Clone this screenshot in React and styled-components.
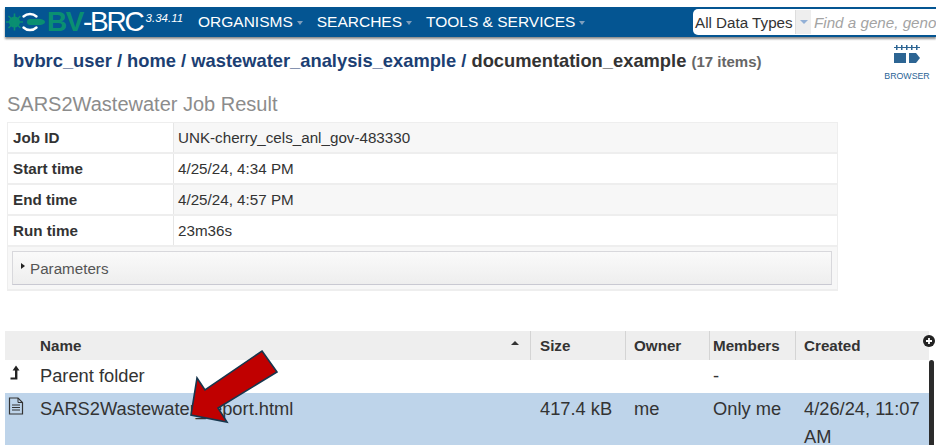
import styled, { createGlobalStyle } from "styled-components";

const GlobalStyle = createGlobalStyle`
  html, body {
    margin: 0;
    padding: 0;
    background: #fff;
    overflow: hidden;
  }
  body {
    font-family: "Liberation Sans", Arial, sans-serif;
    color: #333;
  }
`;

const Page = styled.div`
  position: relative;
  width: 936px;
  height: 446px;
  padding-top: 7px;
  box-sizing: border-box;
  overflow: hidden;
`;

const TopBar = styled.header`
  display: flex;
  align-items: center;
  height: 30px;
  margin-left: 5px;
  background: #045592;
  box-shadow: 0 2px 2px rgba(0, 0, 0, 0.45);
  color: #fff;
  overflow: hidden;
`;

const Brand = styled.div`
  display: flex;
  align-items: center;
  width: 193px;
  flex: none;
`;

const BrandGreen = styled.span`
  font-size: 28px;
  letter-spacing: -1.5px;
  color: #0a8f71;
  font-weight: 700;
`;

const BrandWhite = styled.span`
  font-size: 28px;
  letter-spacing: -2.2px;
  color: #fff;
`;

const Version = styled.sup`
  font-size: 11.5px;
  font-style: italic;
  margin: -6px 0 0 3px;
  align-self: center;
  line-height: 1;
`;

const NavItem = styled.div`
  display: flex;
  align-items: center;
  gap: 4px;
  font-size: 15.5px;
  margin-right: 14px;
  white-space: nowrap;

  &::after {
    content: "";
    border-left: 3.5px solid transparent;
    border-right: 3.5px solid transparent;
    border-top: 4px solid #7f9fbd;
    margin-top: 2px;
  }
`;

const Search = styled.div`
  display: flex;
  align-items: center;
  height: 26px;
  margin-left: auto;
  width: 243px;
  flex: none;
  background: #fff;
  border-radius: 5px 0 0 5px;
  overflow: hidden;
`;

const TypeLabel = styled.span`
  font-size: 15.2px;
  color: #333;
  margin-left: 2px;
  white-space: nowrap;
  width: 100px;
  flex: none;
`;

const TypeArrow = styled.span`
  display: flex;
  align-items: center;
  justify-content: center;
  width: 16px;
  height: 24px;
  flex: none;
  background: #eee;
  border-left: 1px solid #ddd;
  box-sizing: border-box;

  &::after {
    content: "";
    border-left: 4px solid transparent;
    border-right: 4px solid transparent;
    border-top: 4px solid #92b0d6;
  }
`;

const Placeholder = styled.span`
  font-size: 15.2px;
  font-style: italic;
  color: #a3a3a3;
  margin-left: 3px;
  white-space: nowrap;
`;

const TitleRow = styled.div`
  display: flex;
  justify-content: space-between;
  align-items: flex-start;
  height: 55px;
  padding-left: 13px;
`;

const Crumbs = styled.div`
  font-size: 18.33px;
  font-weight: 700;
  color: #1c3f73;
  margin-top: 13px;
  white-space: nowrap;
`;

const Current = styled.span`
  color: #333;
`;

const ItemCount = styled.span`
  font-size: 15px;
  color: #666;
`;

const BrowserButton = styled.div`
  display: flex;
  flex-direction: column;
  align-items: center;
  width: 44px;
  margin: 7px 7px 0 0;
  font-size: 8.8px;
  color: #2a6496;
`;

const BrowserLabel = styled.span`
  margin-top: 7px;
`;

const JobTitle = styled.h2`
  margin: 0 0 6px 7px;
  font-size: 20px;
  line-height: 24px;
  font-weight: 400;
  color: #8c8c8c;
`;

const JobCard = styled.section`
  width: 831px;
  margin-left: 7px;
  border: 1px solid #eee;
  border-bottom-width: 2px;
  box-sizing: border-box;
`;

const JobRow = styled.div`
  display: grid;
  grid-template-columns: 166px 1fr;
  height: 31px;
  box-sizing: border-box;
  border-bottom: 2px solid #eee;
  font-size: 15.2px;
  background: ${(p) => (p.$shaded ? "#f7f7f7" : "#fff")};
`;

const JobKey = styled.div`
  display: flex;
  align-items: center;
  padding-left: 5px;
  font-weight: 700;
  color: #333;
  background: #fff;
  border-right: 1px solid #e6e6e6;
`;

const JobValue = styled.div`
  display: flex;
  align-items: center;
  padding-left: 4px;
`;

const ParamsPane = styled.div`
  padding: 4px 5px 4px 4px;
  background: #f7f7f7;
`;

const ParamsBox = styled.div`
  display: flex;
  align-items: center;
  gap: 5px;
  height: 34px;
  padding-left: 8px;
  box-sizing: border-box;
  border: 1px solid #d8d8dc;
  border-bottom-color: #c9c9d2;
  background: linear-gradient(#fafafa, #eeeeee);
  font-size: 15.2px;
  color: #555;
`;

const Caret = styled.span`
  border-top: 3px solid transparent;
  border-bottom: 3px solid transparent;
  border-left: 4px solid #222;
  margin-top: -4px;
`;

const Grid = styled.section`
  position: relative;
  margin: 40px 0 0 5px;
`;

const GridRow = styled.div`
  display: grid;
  grid-template-columns: 35px 490px 95px 84px 86px 134px;
  width: 924px;
  height: ${(p) => p.$height}px;
  box-sizing: border-box;
  background: ${(p) => p.$bg || "#fff"};
`;

const HeadCell = styled.div`
  display: flex;
  align-items: center;
  position: relative;
  padding: 0 0 0 ${(p) => p.$pad ?? 8}px;
  border-left: ${(p) => (p.$line ? "1px solid #d4d4d4" : "none")};
  font-size: 15.2px;
  font-weight: 700;
  color: #333;
`;

const Cell = styled.div`
  padding: 2px 0 0 ${(p) => p.$pad ?? 9}px;
  font-size: 18.3px;
  line-height: 28px;
  color: #333;
`;

const IconCell = styled.div`
  padding: ${(p) => p.$top}px 0 0 ${(p) => p.$left}px;
`;

const SortMark = styled.span`
  position: absolute;
  right: 11px;
  top: 10px;
  border-left: 4px solid transparent;
  border-right: 4px solid transparent;
  border-bottom: 4px solid #333;
`;

const AddColumn = styled.svg`
  position: absolute;
  right: 1px;
  top: 4px;
`;

const ScrollThumb = styled.div`
  position: absolute;
  right: 2px;
  top: 29px;
  bottom: 0;
  width: 5px;
  border-radius: 3px 3px 0 0;
  background: #2b2b2b;
`;

const Callout = styled.svg`
  position: absolute;
  left: 0;
  top: 0;
  pointer-events: none;
`;

function Logo() {
  return (
    <svg width="42" height="30" viewBox="0 0 42 30">
      <g fill="#0a8f71">
        <circle cx="9.5" cy="15" r="5.5" />
        <path
          d="M9.5 6.5v17M1 15h17M3.5 9l12 12M15.5 9l-12 12"
          stroke="#0a8f71"
          strokeWidth="1.6"
        />
        <path d="M25 12h10c2 0 5 1.4 5 3s-3 3-5 3H25a3 3 0 0 1 0-6z" />
      </g>
      <path
        d="M18.5 9.5a9.5 9.5 0 0 1 13 0M18.5 20.5a9.5 9.5 0 0 0 13 0"
        fill="none"
        stroke="#fff"
        strokeWidth="2.4"
        strokeLinecap="round"
      />
    </svg>
  );
}

function BrowserIcon() {
  return (
    <svg width="28" height="20" viewBox="0 0 28 20">
      <g fill="#2d6593">
        <rect x="1" y="3" width="26" height="1" />
        <rect x="3" y="1" width="1.5" height="5" />
        <rect x="8" y="1" width="1.5" height="5" />
        <rect x="13" y="1" width="1.5" height="5" />
        <rect x="18" y="1" width="1.5" height="5" />
        <rect x="23" y="1" width="1.5" height="5" />
        <rect x="1" y="9" width="12" height="10" />
        <path d="M16 9h7l4 5-4 5h-7z" />
      </g>
    </svg>
  );
}

function UpIcon() {
  return (
    <svg width="10" height="16" viewBox="0 0 10 16">
      <path d="M6 0.5L9.5 5.5H7.4V14.5H0.5V12.6H5V5.5H2.6z" fill="#222" />
    </svg>
  );
}

function FileIcon() {
  return (
    <svg width="16" height="18" viewBox="0 0 16 18">
      <path
        d="M1.5 1h8.5l4.5 4.5V17h-13z"
        fill="none"
        stroke="#333"
        strokeWidth="1.2"
      />
      <path d="M10 1v4.5h4.5" fill="none" stroke="#333" strokeWidth="1" />
      <path d="M4 8h8M4 10.5h8M4 13h8" stroke="#333" strokeWidth="1.2" />
    </svg>
  );
}

const jobRows = [
  ["Job ID", "UNK-cherry_cels_anl_gov-483330"],
  ["Start time", "4/25/24, 4:34 PM"],
  ["End time", "4/25/24, 4:57 PM"],
  ["Run time", "23m36s"],
];

export default function App() {
  return (
    <Page>
      <GlobalStyle />
      <TopBar>
        <Brand>
          <Logo />
          <BrandGreen>BV</BrandGreen>
          <BrandWhite>-BRC</BrandWhite>
          <Version>3.34.11</Version>
        </Brand>
        <NavItem>ORGANISMS</NavItem>
        <NavItem>SEARCHES</NavItem>
        <NavItem>TOOLS &amp; SERVICES</NavItem>
        <Search>
          <TypeLabel>All Data Types</TypeLabel>
          <TypeArrow />
          <Placeholder>Find a gene, geno</Placeholder>
        </Search>
      </TopBar>

      <TitleRow>
        <Crumbs>
          bvbrc_user / home / wastewater_analysis_example /{" "}
          <Current>documentation_example</Current>{" "}
          <ItemCount>(17 items)</ItemCount>
        </Crumbs>
        <BrowserButton>
          <BrowserIcon />
          <BrowserLabel>BROWSER</BrowserLabel>
        </BrowserButton>
      </TitleRow>

      <JobTitle>SARS2Wastewater Job Result</JobTitle>
      <JobCard>
        {jobRows.map(([key, value], i) => (
          <JobRow key={key} $shaded={i % 2 === 0}>
            <JobKey>{key}</JobKey>
            <JobValue>{value}</JobValue>
          </JobRow>
        ))}
        <ParamsPane>
          <ParamsBox>
            <Caret />
            Parameters
          </ParamsBox>
        </ParamsPane>
      </JobCard>

      <Grid>
        <GridRow $height={29} $bg="#eeeeee">
          <HeadCell />
          <HeadCell $pad={0}>
            Name
            <SortMark />
          </HeadCell>
          <HeadCell $line $pad={9}>Size</HeadCell>
          <HeadCell $line>Owner</HeadCell>
          <HeadCell $line $pad={3}>Members</HeadCell>
          <HeadCell $line>Created</HeadCell>
        </GridRow>
        <GridRow $height={33}>
          <IconCell $top={5} $left={5}>
            <UpIcon />
          </IconCell>
          <Cell $pad={0}>Parent folder</Cell>
          <Cell />
          <Cell />
          <Cell $pad={4}>-</Cell>
          <Cell />
        </GridRow>
        <GridRow $height={52} $bg="#bed4ea">
          <IconCell $top={4} $left={3}>
            <FileIcon />
          </IconCell>
          <Cell $pad={0}>SARS2Wastewater_report.html</Cell>
          <Cell $pad={10}>417.4 kB</Cell>
          <Cell>me</Cell>
          <Cell $pad={4}>Only me</Cell>
          <Cell>4/26/24, 11:07 AM</Cell>
        </GridRow>
        <AddColumn width="12" height="12" viewBox="0 0 12 12">
          <circle cx="6" cy="6" r="6" fill="#222" />
          <path d="M3 6h6M6 3v6" stroke="#fff" strokeWidth="1.8" />
        </AddColumn>
        <ScrollThumb />
      </Grid>

      <Callout width="936" height="446" viewBox="0 0 936 446">
        <polygon
          points="262,351 277,372 218,408 227,422 191,415 197,378 205,390"
          fill="#c00000"
          stroke="#17364d"
          strokeWidth="1.6"
        />
      </Callout>
    </Page>
  );
}
